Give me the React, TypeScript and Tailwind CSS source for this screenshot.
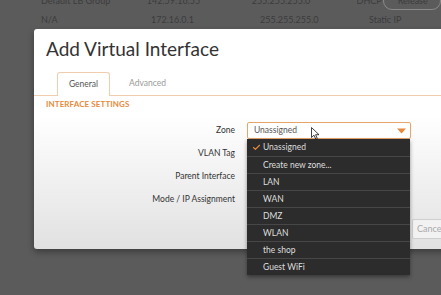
import { Check } from "lucide-react";

const zones = ["Unassigned", "Create new zone...", "LAN", "WAN", "DMZ", "WLAN", "the shop", "Guest WiFi"];

const formRows = ["Zone", "VLAN Tag", "Parent Interface", "Mode / IP Assignment"];

export default function App() {
  return (
    <div className="relative w-[441px] h-[295px] overflow-hidden bg-[#5b5b5b] font-['Lato','Open_Sans',sans-serif]">
      {/* table behind the dialog */}
      <div className="-mt-[9px] text-[9px] text-[#3b3b3b]">
        <div className="flex h-[19px] items-center pl-[41px]">
          <span className="w-[110px]">Default LB Group</span>
          <span className="w-[109px]">142.59.16.55</span>
          <span className="w-[109px]">255.255.255.0</span>
          <span className="w-[26px]">DHCP</span>
          <span className="ml-[1px] h-[18px] w-[60px] rounded-[9px] border border-[#8a8a8a] pl-[14px] leading-[16px]">Release</span>
        </div>
        <div className="flex h-[19px] items-center pl-[41px]">
          <span className="w-[110px]">N/A</span>
          <span className="w-[109px]">172.16.0.1</span>
          <span className="w-[109px]">255.255.255.0</span>
          <span>Static IP</span>
        </div>
      </div>

      {/* dialog */}
      <div className="ml-[34px] flex h-[220px] w-[440px] flex-col rounded-[3px] bg-gradient-to-b from-white from-40% to-[#e1e1e1] shadow-[0_3px_6px_rgba(0,0,0,0.35)]">
        <h1 className="pl-[12px] pt-[8px] text-[19px] leading-[24px] text-[#333]">Add Virtual Interface</h1>

        <div className="mt-[11px] flex border-b border-[#f1cdb0] pl-[23px] text-[8.5px]">
          <div className="-mb-px flex h-[24px] w-[53px] items-center justify-center rounded-t-[3px] border border-b-0 border-[#f1cdb0] bg-white text-[#555]">
            General
          </div>
          <div className="flex h-[23px] w-[75px] items-center justify-center text-[#9a9a9a]">Advanced</div>
        </div>

        <div className="pl-[12px] pt-[3px] text-[8px] font-bold leading-[10px] tracking-[0.1px] text-[#e8893c]">
          INTERFACE SETTINGS
        </div>

        <div className="mt-[10px] flex flex-col text-[8.5px] text-[#333]">
          {formRows.map((label, i) => (
            <div key={label} className="flex h-[23px] items-center">
              <span className="w-[201px] text-right">{label}</span>
              {i === 0 && (
                <div className="ml-[12px] flex h-[17px] w-[164px] items-center justify-between rounded-[2px] border border-[#e9a468] bg-white pl-[6px] pr-[4px] text-[#555]">
                  <span>Unassigned</span>
                  <svg width="9" height="6" viewBox="0 0 9 6">
                    <path d="M0 0.5 H9 L4.5 5.5 Z" fill="#e8893c" />
                  </svg>
                </div>
              )}
            </div>
          ))}
        </div>

        <div className="mt-auto flex pb-[10px] pl-[378px]">
          <div className="flex h-[20px] w-[60px] items-center rounded-l-[2px] border border-r-0 border-[#cfcfcf] bg-[#f2f2f2] pl-[4px] text-[9px] text-[#a9a9a9]">
            Cancel
          </div>
        </div>
      </div>

      {/* open zone menu */}
      <ul className="absolute left-[247px] top-[139px] w-[163px] bg-[#2c2c2c] text-[8.5px] text-[#dedede] shadow-[0_2px_4px_rgba(0,0,0,0.4)]">
        {zones.map((z, i) => (
          <li
            key={z}
            className={`relative flex h-[17px] items-center pl-[16px] ${i > 0 ? "border-t border-[#474747]" : ""}`}
          >
            {i === 0 && <Check className="absolute left-[5px] h-[9px] w-[9px] text-[#e8893c]" strokeWidth={3} />}
            {z}
          </li>
        ))}
      </ul>

      {/* mouse pointer */}
      <svg className="absolute left-[311px] top-[127px]" width="9" height="13" viewBox="0 0 9 13">
        <path d="M0.5 0.5 V10.5 L3 8.2 L4.8 12.2 L6.3 11.5 L4.6 7.7 H8 Z" fill="#fff" stroke="#111" strokeWidth="0.8" strokeLinejoin="round" />
      </svg>
    </div>
  );
}
